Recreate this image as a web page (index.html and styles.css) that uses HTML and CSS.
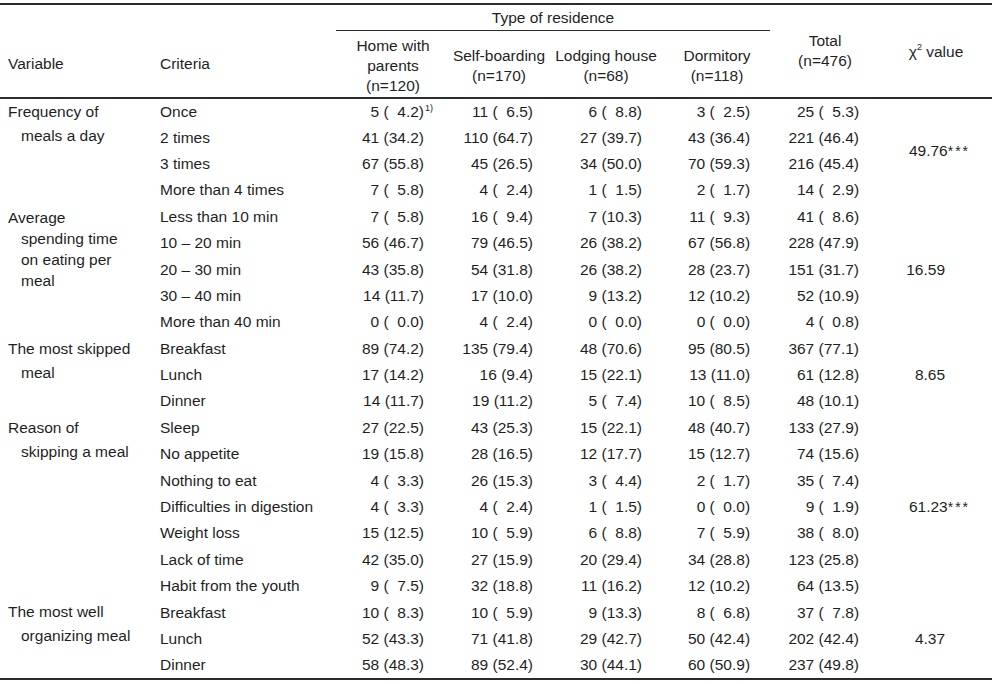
FILE: index.html
```html
<!DOCTYPE html>
<html lang="en">
<head>
<meta charset="utf-8">
<title>Meal habits by type of residence</title>
<link rel="stylesheet" href="styles.css">
</head>
<body>
<table class="tbl">
  <colgroup>
    <col class="c-var"><col class="c-crit"><col class="c-home"><col class="c-self"><col class="c-lodge"><col class="c-dorm"><col class="c-total"><col class="c-chi">
  </colgroup>
  <thead>
    <tr class="h1">
      <th rowspan="2" class="hv">Variable</th>
      <th rowspan="2" class="hc">Criteria</th>
      <th colspan="4" class="type">Type of residence</th>
      <th rowspan="2" class="hm">Total<br>(n=476)</th>
      <th rowspan="2" class="hm hchi">χ<sup class="sq">2</sup> value</th>
    </tr>
    <tr class="h2">
      <th>Home with<br>parents<br>(n=120)</th>
      <th>Self-boarding<br>(n=170)</th>
      <th>Lodging house<br>(n=68)</th>
      <th>Dormitory<br>(n=118)</th>
    </tr>
  </thead>
  <tbody>
    <tr>
      <td rowspan="4" class="var"><span class="ln">Frequency of</span><span class="ln">meals a day</span></td>
      <td class="crit">Once</td>
      <td class="n home">5 (&#8199;4.2)<sup class="fn">1)</sup></td><td class="n self">11 (&#8199;6.5)</td><td class="n lodge">6 (&#8199;8.8)</td><td class="n dorm">3 (&#8199;2.5)</td><td class="n total">25 (&#8199;5.3)</td>
      <td rowspan="4" class="chi">49.76<span class="st">***</span></td>
    </tr>
    <tr><td class="crit">2 times</td><td class="n home">41 (34.2)</td><td class="n self">110 (64.7)</td><td class="n lodge">27 (39.7)</td><td class="n dorm">43 (36.4)</td><td class="n total">221 (46.4)</td></tr>
    <tr><td class="crit">3 times</td><td class="n home">67 (55.8)</td><td class="n self">45 (26.5)</td><td class="n lodge">34 (50.0)</td><td class="n dorm">70 (59.3)</td><td class="n total">216 (45.4)</td></tr>
    <tr><td class="crit">More than 4 times</td><td class="n home">7 (&#8199;5.8)</td><td class="n self">4 (&#8199;2.4)</td><td class="n lodge">1 (&#8199;1.5)</td><td class="n dorm">2 (&#8199;1.7)</td><td class="n total">14 (&#8199;2.9)</td></tr>

    <tr>
      <td rowspan="5" class="var tight"><span class="ln">Average</span><span class="ln">spending time</span><span class="ln">on eating per</span><span class="ln">meal</span></td>
      <td class="crit">Less than 10 min</td>
      <td class="n home">7 (&#8199;5.8)</td><td class="n self">16 (&#8199;9.4)</td><td class="n lodge">7 (10.3)</td><td class="n dorm">11 (&#8199;9.3)</td><td class="n total">41 (&#8199;8.6)</td>
      <td rowspan="5" class="chi">16.59</td>
    </tr>
    <tr><td class="crit">10 – 20 min</td><td class="n home">56 (46.7)</td><td class="n self">79 (46.5)</td><td class="n lodge">26 (38.2)</td><td class="n dorm">67 (56.8)</td><td class="n total">228 (47.9)</td></tr>
    <tr><td class="crit">20 – 30 min</td><td class="n home">43 (35.8)</td><td class="n self">54 (31.8)</td><td class="n lodge">26 (38.2)</td><td class="n dorm">28 (23.7)</td><td class="n total">151 (31.7)</td></tr>
    <tr><td class="crit">30 – 40 min</td><td class="n home">14 (11.7)</td><td class="n self">17 (10.0)</td><td class="n lodge">9 (13.2)</td><td class="n dorm">12 (10.2)</td><td class="n total">52 (10.9)</td></tr>
    <tr><td class="crit">More than 40 min</td><td class="n home">0 (&#8199;0.0)</td><td class="n self">4 (&#8199;2.4)</td><td class="n lodge">0 (&#8199;0.0)</td><td class="n dorm">0 (&#8199;0.0)</td><td class="n total">4 (&#8199;0.8)</td></tr>

    <tr>
      <td rowspan="3" class="var"><span class="ln">The most skipped</span><span class="ln">meal</span></td>
      <td class="crit">Breakfast</td>
      <td class="n home">89 (74.2)</td><td class="n self">135 (79.4)</td><td class="n lodge">48 (70.6)</td><td class="n dorm">95 (80.5)</td><td class="n total">367 (77.1)</td>
      <td rowspan="3" class="chi">8.65</td>
    </tr>
    <tr><td class="crit">Lunch</td><td class="n home">17 (14.2)</td><td class="n self">16 (9.4)</td><td class="n lodge">15 (22.1)</td><td class="n dorm">13 (11.0)</td><td class="n total">61 (12.8)</td></tr>
    <tr><td class="crit">Dinner</td><td class="n home">14 (11.7)</td><td class="n self">19 (11.2)</td><td class="n lodge">5 (&#8199;7.4)</td><td class="n dorm">10 (&#8199;8.5)</td><td class="n total">48 (10.1)</td></tr>

    <tr>
      <td rowspan="7" class="var"><span class="ln">Reason of</span><span class="ln">skipping a meal</span></td>
      <td class="crit">Sleep</td>
      <td class="n home">27 (22.5)</td><td class="n self">43 (25.3)</td><td class="n lodge">15 (22.1)</td><td class="n dorm">48 (40.7)</td><td class="n total">133 (27.9)</td>
      <td rowspan="7" class="chi">61.23<span class="st">***</span></td>
    </tr>
    <tr><td class="crit">No appetite</td><td class="n home">19 (15.8)</td><td class="n self">28 (16.5)</td><td class="n lodge">12 (17.7)</td><td class="n dorm">15 (12.7)</td><td class="n total">74 (15.6)</td></tr>
    <tr><td class="crit">Nothing to eat</td><td class="n home">4 (&#8199;3.3)</td><td class="n self">26 (15.3)</td><td class="n lodge">3 (&#8199;4.4)</td><td class="n dorm">2 (&#8199;1.7)</td><td class="n total">35 (&#8199;7.4)</td></tr>
    <tr><td class="crit">Difficulties in digestion</td><td class="n home">4 (&#8199;3.3)</td><td class="n self">4 (&#8199;2.4)</td><td class="n lodge">1 (&#8199;1.5)</td><td class="n dorm">0 (&#8199;0.0)</td><td class="n total">9 (&#8199;1.9)</td></tr>
    <tr><td class="crit">Weight loss</td><td class="n home">15 (12.5)</td><td class="n self">10 (&#8199;5.9)</td><td class="n lodge">6 (&#8199;8.8)</td><td class="n dorm">7 (&#8199;5.9)</td><td class="n total">38 (&#8199;8.0)</td></tr>
    <tr><td class="crit">Lack of time</td><td class="n home">42 (35.0)</td><td class="n self">27 (15.9)</td><td class="n lodge">20 (29.4)</td><td class="n dorm">34 (28.8)</td><td class="n total">123 (25.8)</td></tr>
    <tr><td class="crit">Habit from the youth</td><td class="n home">9 (&#8199;7.5)</td><td class="n self">32 (18.8)</td><td class="n lodge">11 (16.2)</td><td class="n dorm">12 (10.2)</td><td class="n total">64 (13.5)</td></tr>

    <tr>
      <td rowspan="3" class="var"><span class="ln">The most well</span><span class="ln">organizing meal</span></td>
      <td class="crit">Breakfast</td>
      <td class="n home">10 (&#8199;8.3)</td><td class="n self">10 (&#8199;5.9)</td><td class="n lodge">9 (13.3)</td><td class="n dorm">8 (&#8199;6.8)</td><td class="n total">37 (&#8199;7.8)</td>
      <td rowspan="3" class="chi">4.37</td>
    </tr>
    <tr><td class="crit">Lunch</td><td class="n home">52 (43.3)</td><td class="n self">71 (41.8)</td><td class="n lodge">29 (42.7)</td><td class="n dorm">50 (42.4)</td><td class="n total">202 (42.4)</td></tr>
    <tr><td class="crit">Dinner</td><td class="n home">58 (48.3)</td><td class="n self">89 (52.4)</td><td class="n lodge">30 (44.1)</td><td class="n dorm">60 (50.9)</td><td class="n total">237 (49.8)</td></tr>
  </tbody>
</table>
</body>
</html>
```
FILE: styles.css
```css
html, body {
  margin: 0;
  padding: 0;
  background: #fff;
}
body {
  padding-top: 3px;
  font-family: "Liberation Sans", Arial, sans-serif;
  font-size: 15.5px;
  color: #1f1f1f;
}
.tbl {
  width: 992px;
  border-collapse: collapse;
  table-layout: fixed;
}
.c-var { width: 152px; }
.c-crit { width: 184px; }
.c-home { width: 114px; }
.c-self { width: 98px; }
.c-lodge { width: 116px; }
.c-dorm { width: 106px; }
.c-total { width: 110px; }
.c-chi { width: 112px; }

.tbl th, .tbl td {
  padding: 0;
  font-weight: normal;
  white-space: nowrap;
}
.tbl thead {
  border-top: 2px solid #2b2b2b;
  border-bottom: 2px solid #2b2b2b;
}
.tbl tbody {
  border-bottom: 2px solid #2b2b2b;
}
.h1 th {
  height: 25px;
  line-height: 20px;
  text-align: center;
  vertical-align: middle;
}
.type {
  border-bottom: 1px solid #2b2b2b;
}
.h2 th {
  height: 62px;
  padding-top: 4px;
  line-height: 20px;
  text-align: center;
  vertical-align: middle;
}
.hv, .hc {
  text-align: left !important;
  vertical-align: middle;
  padding-top: 26px !important;
  padding-left: 8px !important;
}
.hm { line-height: 20px; }
.hchi { padding-top: 2px !important; }
.sq {
  font-size: 9px;
  vertical-align: 7px;
  line-height: 0;
}
.tbl tbody tr {
  height: 26.4px;
}
.tbl tbody td {
  vertical-align: middle;
  line-height: 18px;
}
.tbl tbody td.var {
  vertical-align: top;
  padding: 1px 0 0 8px;
  line-height: 24px;
}
.tbl tbody td.var.tight {
  padding-top: 3px;
  line-height: 21px;
}
.ln {
  display: block;
}
.ln + .ln {
  padding-left: 13px;
}
.crit {
  padding-left: 8px !important;
}
.n { text-align: right; }
.home { padding-right: 26px !important; }
.self { padding-right: 15px !important; }
.lodge { padding-right: 22px !important; }
.dorm { padding-right: 20px !important; }
.total { padding-right: 21px !important; }
.fn {
  font-size: 9px;
  vertical-align: 6px;
  line-height: 0;
  margin-right: -9px;
  padding-left: 1px;
}
.chi {
  text-align: right;
  padding-right: 47px !important;
  vertical-align: middle;
}
.st {
  margin-right: -25px;
  letter-spacing: 2px;
  font-size: 14px;
}
```
